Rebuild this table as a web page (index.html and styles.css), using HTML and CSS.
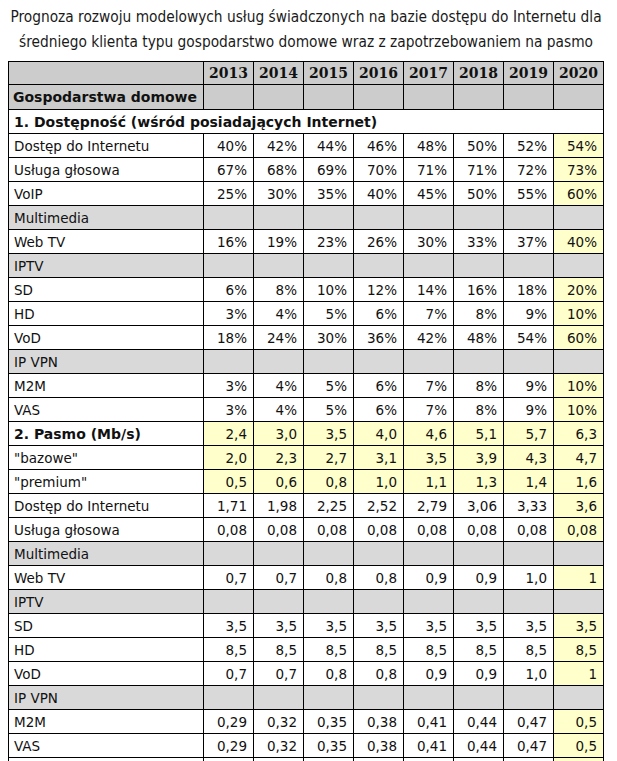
FILE: index.html
```html
<!DOCTYPE html>
<html lang="pl">
<head>
<meta charset="utf-8">
<title>Prognoza</title>
<link rel="stylesheet" href="styles.css">
</head>
<body>
<div class="title">
  <p>Prognoza rozwoju modelowych usług świadczonych na bazie dostępu do Internetu dla</p>
  <p>średniego klienta typu gospodarstwo domowe wraz z zapotrzebowaniem na pasmo</p>
</div>
<table class="grid">
  <colgroup>
    <col class="c-label"><col class="c-year"><col class="c-year"><col class="c-year"><col class="c-year"><col class="c-year"><col class="c-year"><col class="c-year"><col class="c-year">
  </colgroup>
  <tr class="head yr"><td></td><td>2013</td><td>2014</td><td>2015</td><td>2016</td><td>2017</td><td>2018</td><td>2019</td><td>2020</td></tr>
  <tr class="head gosp"><td>Gospodarstwa domowe</td><td></td><td></td><td></td><td></td><td></td><td></td><td></td><td></td></tr>
  <tr class="sec-title"><td colspan="9">1. Dostępność (wśród posiadających Internet)</td></tr>
  <tr><td>Dostęp do Internetu</td><td>40%</td><td>42%</td><td>44%</td><td>46%</td><td>48%</td><td>50%</td><td>52%</td><td class="y">54%</td></tr>
  <tr><td>Usługa głosowa</td><td>67%</td><td>68%</td><td>69%</td><td>70%</td><td>71%</td><td>71%</td><td>72%</td><td class="y">73%</td></tr>
  <tr><td>VoIP</td><td>25%</td><td>30%</td><td>35%</td><td>40%</td><td>45%</td><td>50%</td><td>55%</td><td class="y">60%</td></tr>
  <tr class="grp"><td>Multimedia</td><td></td><td></td><td></td><td></td><td></td><td></td><td></td><td></td></tr>
  <tr><td>Web TV</td><td>16%</td><td>19%</td><td>23%</td><td>26%</td><td>30%</td><td>33%</td><td>37%</td><td class="y">40%</td></tr>
  <tr class="grp"><td>IPTV</td><td></td><td></td><td></td><td></td><td></td><td></td><td></td><td></td></tr>
  <tr><td>SD</td><td>6%</td><td>8%</td><td>10%</td><td>12%</td><td>14%</td><td>16%</td><td>18%</td><td class="y">20%</td></tr>
  <tr><td>HD</td><td>3%</td><td>4%</td><td>5%</td><td>6%</td><td>7%</td><td>8%</td><td>9%</td><td class="y">10%</td></tr>
  <tr><td>VoD</td><td>18%</td><td>24%</td><td>30%</td><td>36%</td><td>42%</td><td>48%</td><td>54%</td><td class="y">60%</td></tr>
  <tr class="grp"><td>IP VPN</td><td></td><td></td><td></td><td></td><td></td><td></td><td></td><td></td></tr>
  <tr><td>M2M</td><td>3%</td><td>4%</td><td>5%</td><td>6%</td><td>7%</td><td>8%</td><td>9%</td><td class="y">10%</td></tr>
  <tr><td>VAS</td><td>3%</td><td>4%</td><td>5%</td><td>6%</td><td>7%</td><td>8%</td><td>9%</td><td class="y">10%</td></tr>
  <tr class="allY"><td class="b">2. Pasmo (Mb/s)</td><td>2,4</td><td>3,0</td><td>3,5</td><td>4,0</td><td>4,6</td><td>5,1</td><td>5,7</td><td>6,3</td></tr>
  <tr class="allY"><td>"bazowe"</td><td>2,0</td><td>2,3</td><td>2,7</td><td>3,1</td><td>3,5</td><td>3,9</td><td>4,3</td><td>4,7</td></tr>
  <tr class="allY"><td>"premium"</td><td>0,5</td><td>0,6</td><td>0,8</td><td>1,0</td><td>1,1</td><td>1,3</td><td>1,4</td><td>1,6</td></tr>
  <tr><td>Dostęp do Internetu</td><td>1,71</td><td>1,98</td><td>2,25</td><td>2,52</td><td>2,79</td><td>3,06</td><td>3,33</td><td class="y">3,6</td></tr>
  <tr><td>Usługa głosowa</td><td>0,08</td><td>0,08</td><td>0,08</td><td>0,08</td><td>0,08</td><td>0,08</td><td>0,08</td><td class="y">0,08</td></tr>
  <tr class="grp"><td>Multimedia</td><td></td><td></td><td></td><td></td><td></td><td></td><td></td><td></td></tr>
  <tr><td>Web TV</td><td>0,7</td><td>0,7</td><td>0,8</td><td>0,8</td><td>0,9</td><td>0,9</td><td>1,0</td><td class="y">1</td></tr>
  <tr class="grp"><td>IPTV</td><td></td><td></td><td></td><td></td><td></td><td></td><td></td><td></td></tr>
  <tr><td>SD</td><td>3,5</td><td>3,5</td><td>3,5</td><td>3,5</td><td>3,5</td><td>3,5</td><td>3,5</td><td class="y">3,5</td></tr>
  <tr><td>HD</td><td>8,5</td><td>8,5</td><td>8,5</td><td>8,5</td><td>8,5</td><td>8,5</td><td>8,5</td><td class="y">8,5</td></tr>
  <tr><td>VoD</td><td>0,7</td><td>0,7</td><td>0,8</td><td>0,8</td><td>0,9</td><td>0,9</td><td>1,0</td><td class="y">1</td></tr>
  <tr class="grp"><td>IP VPN</td><td></td><td></td><td></td><td></td><td></td><td></td><td></td><td></td></tr>
  <tr><td>M2M</td><td>0,29</td><td>0,32</td><td>0,35</td><td>0,38</td><td>0,41</td><td>0,44</td><td>0,47</td><td class="y">0,5</td></tr>
  <tr><td>VAS</td><td>0,29</td><td>0,32</td><td>0,35</td><td>0,38</td><td>0,41</td><td>0,44</td><td>0,47</td><td class="y">0,5</td></tr>
  <tr><td>&nbsp;</td><td></td><td></td><td></td><td></td><td></td><td></td><td></td><td class="y"></td></tr>
</table>
</body>
</html>
```
FILE: styles.css
```css
html, body {
  margin: 0;
  padding: 0;
  background: #ffffff;
}
body {
  padding: 5px 0 0 8px;
  font-family: "DejaVu Sans", sans-serif;
  color: #111111;
}
.title {
  width: 596px;
  text-align: center;
  font-family: "DejaVu Sans Condensed", "DejaVu Sans", sans-serif;
  font-size: 15.3px;
  line-height: 25px;
  color: #1a1a1a;
  margin-bottom: 6px;
}
.title p {
  margin: 0;
  white-space: nowrap;
}
.grid {
  border-collapse: collapse;
  table-layout: fixed;
  width: 596px;
  font-size: 13.5px;
}
.c-label { width: 195px; }
.c-year { width: 50px; }
.grid td {
  border: 1px solid #000000;
  height: 23px;
  padding: 0 6px 0 4px;
  text-align: right;
  white-space: nowrap;
  overflow: hidden;
  background: #ffffff;
}
.grid td:first-child {
  text-align: left;
  padding-left: 5px;
}
.head td {
  background: #cccccc;
}
.yr td {
  height: 22px;
  font-family: "DejaVu Serif", serif;
  font-weight: bold;
  font-size: 14px;
  text-align: center;
  padding: 0;
}
.gosp td {
  height: 24px;
  font-weight: bold;
  font-size: 14px;
}
.grid .gosp td:first-child {
  padding-left: 4px;
}
.sec-title td {
  font-weight: bold;
  font-size: 14px;
}
.grp td {
  background: #d9d9d9;
}
.grid td.y,
.allY td {
  background: #ffffcc;
}
.allY td:first-child {
  background: #ffffff;
}
.grid td.b {
  font-weight: bold;
  font-size: 14px;
}
```
